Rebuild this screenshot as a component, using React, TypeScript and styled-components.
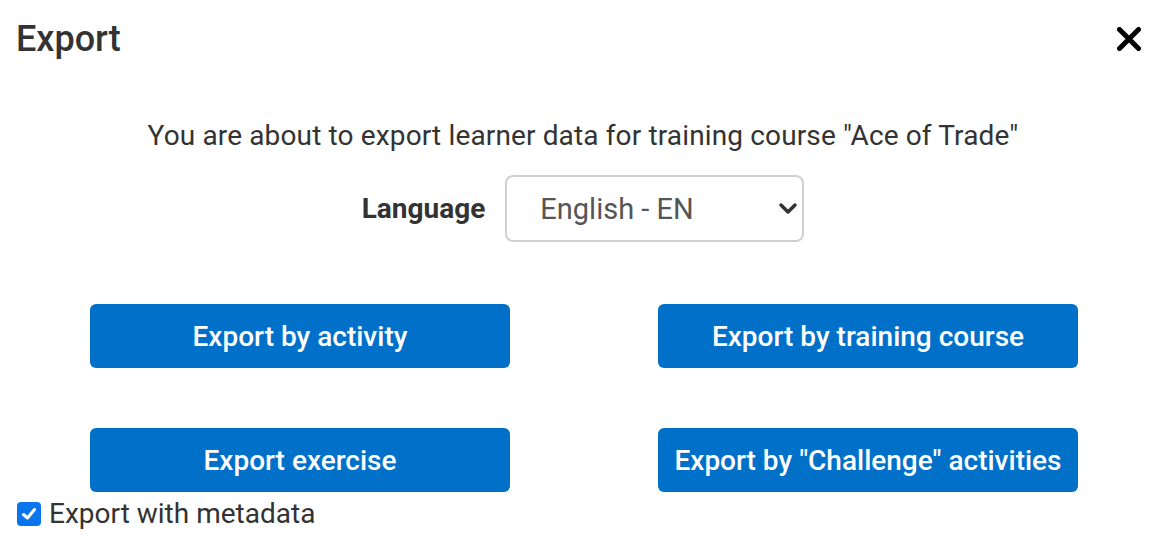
import React from "react";
import styled, { createGlobalStyle } from "styled-components";

const Global = createGlobalStyle`
  html, body { margin: 0; padding: 0; background: #fff; }
  body { font-family: Roboto, "Liberation Sans", sans-serif; color: #333; }
  * { box-sizing: border-box; }
`;

const Dialog = styled.div`
  width: 1164px;
  height: 546px;
  display: flex;
  flex-direction: column;
  padding: 0 0 0 16px;
`;

const Header = styled.div`
  display: flex;
  align-items: center;
  justify-content: space-between;
  height: 78px;
  padding-right: 22px;
`;

const Title = styled.h1`
  margin: 0;
  font-size: 36px;
  font-weight: 500;
  color: #333;
  line-height: 1;
`;

const Close = styled.button`
  border: none;
  background: none;
  padding: 0;
  width: 26px;
  height: 26px;
  display: flex;
  align-items: center;
  justify-content: center;
  cursor: pointer;
`;

const Body = styled.div`
  display: flex;
  flex-direction: column;
  align-items: center;
  padding-right: 14px;
`;

const Intro = styled.p`
  margin: 38px 0 0;
  font-size: 28px;
  letter-spacing: 0.14px;
  line-height: 40px;
  color: #333;
  text-align: center;
`;

const LangRow = styled.div`
  display: flex;
  align-items: center;
  gap: 20px;
  margin-top: 19px;
`;

const Label = styled.label`
  font-size: 28px;
  font-weight: 700;
  color: #333;
`;

const SelectWrap = styled.div`
  position: relative;
  width: 299px;
  height: 67px;
`;

const Select = styled.select`
  appearance: none;
  width: 100%;
  height: 100%;
  border: 2px solid #d0d0d0;
  border-radius: 8px;
  background: #fff;
  padding: 0 0 0 33px;
  font-family: Roboto, "Liberation Sans", sans-serif;
  font-size: 29px;
  color: #555;
`;

const Chevron = styled.svg`
  position: absolute;
  right: 6px;
  top: 27px;
  pointer-events: none;
`;

const Grid = styled.div`
  display: grid;
  grid-template-columns: 420px 420px;
  justify-content: center;
  column-gap: 148px;
  row-gap: 60px;
  margin-top: 62px;
  padding-right: 12px;
`;

const ActionButton = styled.button`
  height: 64px;
  border: none;
  border-radius: 6px;
  background: #0070c9;
  color: #fff;
  font-family: Roboto, "Liberation Sans", sans-serif;
  font-size: 28px;
  font-weight: 500;
  cursor: pointer;
`;

const CheckRow = styled.label`
  display: flex;
  align-items: center;
  gap: 8px;
  margin-top: 5px;
  margin-left: 1px;
  font-size: 28px;
  color: #333;
`;

const Box = styled.span`
  width: 24px;
  height: 24px;
  border-radius: 4px;
  background: #0b75ee;
  display: flex;
  align-items: center;
  justify-content: center;
`;

export default function App() {
  return (
    <Dialog>
      <Global />
      <Header>
        <Title>Export</Title>
        <Close aria-label="Close">
          <svg width="24" height="24" viewBox="0 0 24 24">
            <path d="M2.5 2.5 L21.5 21.5 M21.5 2.5 L2.5 21.5" stroke="#000" strokeWidth="5" strokeLinecap="round" />
          </svg>
        </Close>
      </Header>
      <Body>
        <Intro>You are about to export learner data for training course "Ace of Trade"</Intro>
        <LangRow>
          <Label>Language</Label>
          <SelectWrap>
            <Select defaultValue="en">
              <option value="en">English - EN</option>
            </Select>
            <Chevron width="20" height="14" viewBox="0 0 20 14">
              <path d="M3 3 L10 10 L17 3" fill="none" stroke="#333" strokeWidth="3.5" strokeLinecap="round" strokeLinejoin="round" />
            </Chevron>
          </SelectWrap>
        </LangRow>
      </Body>
      <Grid>
        <ActionButton>Export by activity</ActionButton>
        <ActionButton>Export by training course</ActionButton>
        <ActionButton>Export exercise</ActionButton>
        <ActionButton>Export by "Challenge" activities</ActionButton>
      </Grid>
      <CheckRow>
        <Box>
          <svg width="18" height="18" viewBox="0 0 18 18">
            <path d="M3.5 9.5 L7.5 13 L14.5 4.5" fill="none" stroke="#fff" strokeWidth="3" strokeLinecap="round" strokeLinejoin="round" />
          </svg>
        </Box>
        Export with metadata
      </CheckRow>
    </Dialog>
  );
}
